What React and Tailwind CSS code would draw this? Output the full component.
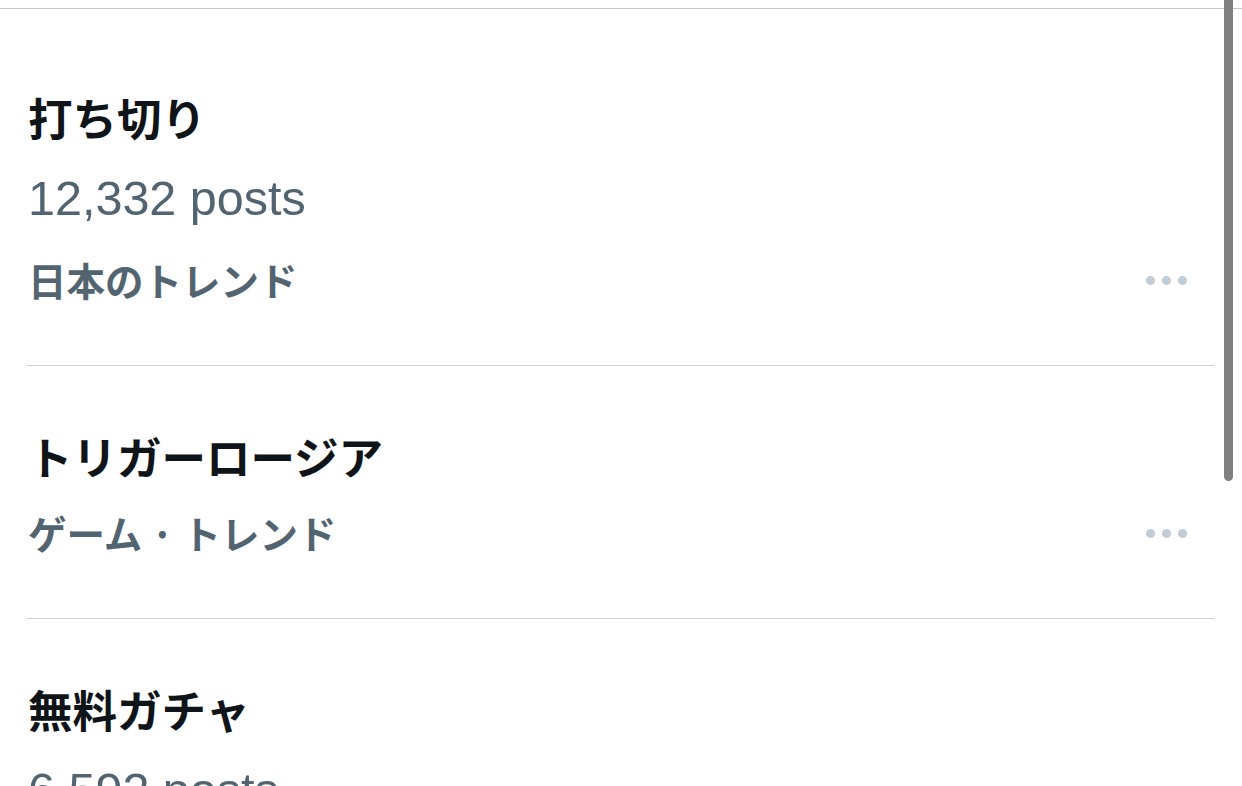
import React from 'react';

const cjk = { fontFamily: '"Noto Sans CJK JP", "Noto Sans", sans-serif' };

const trends = [
  { title: "打ち切り", posts: "12,332 posts", category: "日本のトレンド" },
  { title: "トリガーロージア", category: "ゲーム · トレンド" },
  { title: "無料ガチャ", posts: "6,592 posts", category: "ゲーム · トレンド" },
];

const Dots = () => (
  <div className="flex h-[78px] items-center gap-[7px] pr-[28px]">
    <span className="h-[9px] w-[9px] rounded-full bg-[#c2ccd4]" />
    <span className="h-[9px] w-[9px] rounded-full bg-[#c2ccd4]" />
    <span className="h-[9px] w-[9px] rounded-full bg-[#c2ccd4]" />
  </div>
);

const TrendItem = ({ trend }) => (
  <div className="flex items-end justify-between border-b border-[#d2d2d2] pt-[52px] pb-[46px]">
    <div className="flex flex-col pl-px">
      <div className="flex h-[76px] items-center text-[44.5px] font-bold text-[#0f1419]" style={cjk}>
        {trend.title}
      </div>
      {trend.posts && (
        <div
          className="flex h-[86px] items-center text-[48.5px] text-[#536471]"
          style={{ fontFamily: '"Liberation Sans", "Noto Sans CJK JP", sans-serif' }}
        >
          {trend.posts}
        </div>
      )}
      <div className="flex h-[78px] items-center text-[38.5px] font-semibold text-[#536471]" style={cjk}>
        {trend.category}
      </div>
    </div>
    <Dots />
  </div>
);

export default function App() {
  return (
    <div className="relative h-[786px] w-full overflow-hidden bg-white pt-2">
      <div className="border-t border-[#c8c8c8]" />
      <div className="px-[27px] pt-[18px]">
        {trends.map((t) => (
          <TrendItem key={t.title} trend={t} />
        ))}
      </div>
      <div className="absolute right-[9px] top-0 h-[481px] w-[9px] rounded-b-full bg-[#808080]" />
    </div>
  );
}
